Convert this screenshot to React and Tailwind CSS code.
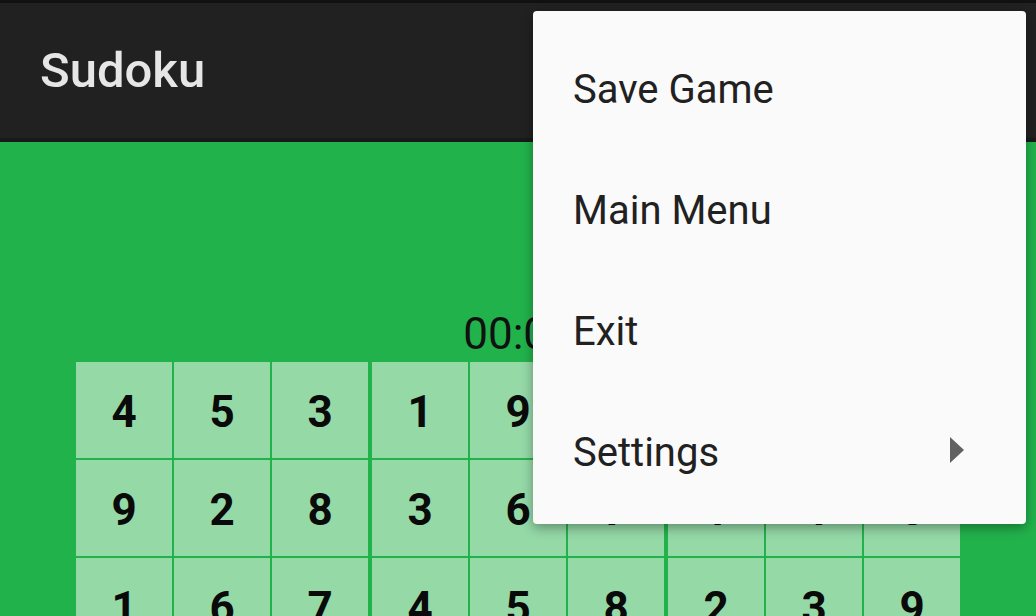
import React from "react";

const rows = [
  [4, 5, 3, 1, 9, 2, 6, 7, 8],
  [9, 2, 8, 3, 6, 7, 1, 4, 5],
  [1, 6, 7, 4, 5, 8, 2, 3, 9],
];

function Row({ values }) {
  return (
    <div className="flex">
      {[0, 1, 2].map((b) => (
        <div key={b} className={"flex gap-[2px] " + (b > 0 ? "ml-[4px]" : "")}>
          {values.slice(b * 3, b * 3 + 3).map((v, i) => (
            <div
              key={i}
              className="w-[96px] h-[96px] bg-[#95d9a7] flex items-center justify-center pt-[4px] text-[44px] font-bold text-[#0a0a0a] leading-none"
            >
              {v}
            </div>
          ))}
        </div>
      ))}
    </div>
  );
}

export default function App() {
  const font = { fontFamily: "Roboto, 'Noto Sans', sans-serif" };
  return (
    <div className="relative w-[1036px] h-[616px] overflow-hidden bg-[#22b24c]" style={font}>
      <div className="h-[142px] bg-[#212121] border-t-[3px] border-[#111111] border-b-[4px] border-b-[#191919] flex items-center px-[40px]">
        <span className="text-[49px] font-medium text-[#e6e6e6] leading-none">Sudoku</span>
      </div>
      <div className="flex flex-col">
        <div className="mt-[170px] h-[44px] flex justify-center text-[44px] leading-[44px] text-[#111111]">
          <span>00:00</span>
        </div>
        <div className="mt-[6px] ml-[76px] flex flex-col">
          <div className="flex flex-col gap-[2px]">
            <Row values={rows[0]} />
            <Row values={rows[1]} />
            <Row values={rows[2]} />
          </div>
        </div>
      </div>

      <div className="absolute left-[533px] top-[11px] w-[493px] h-[513px] bg-[#fafafa] rounded-[4px] shadow-[0_4px_12px_rgba(0,0,0,0.35)] pt-[18px] pb-[11px] flex flex-col">
        {["Save Game", "Main Menu", "Exit", "Settings"].map((t) => (
          <div key={t} className="h-[121px] shrink-0 flex items-center justify-between pl-[40px] pr-[62px]">
            <span className="text-[40px] text-[#212121] leading-none">{t}</span>
            {t === "Settings" && (
              <svg width="14" height="26" viewBox="0 0 14 26" className="-mt-[5px]">
                <polygon points="0,0 14,13 0,26" fill="#616161" />
              </svg>
            )}
          </div>
        ))}
      </div>
    </div>
  );
}
